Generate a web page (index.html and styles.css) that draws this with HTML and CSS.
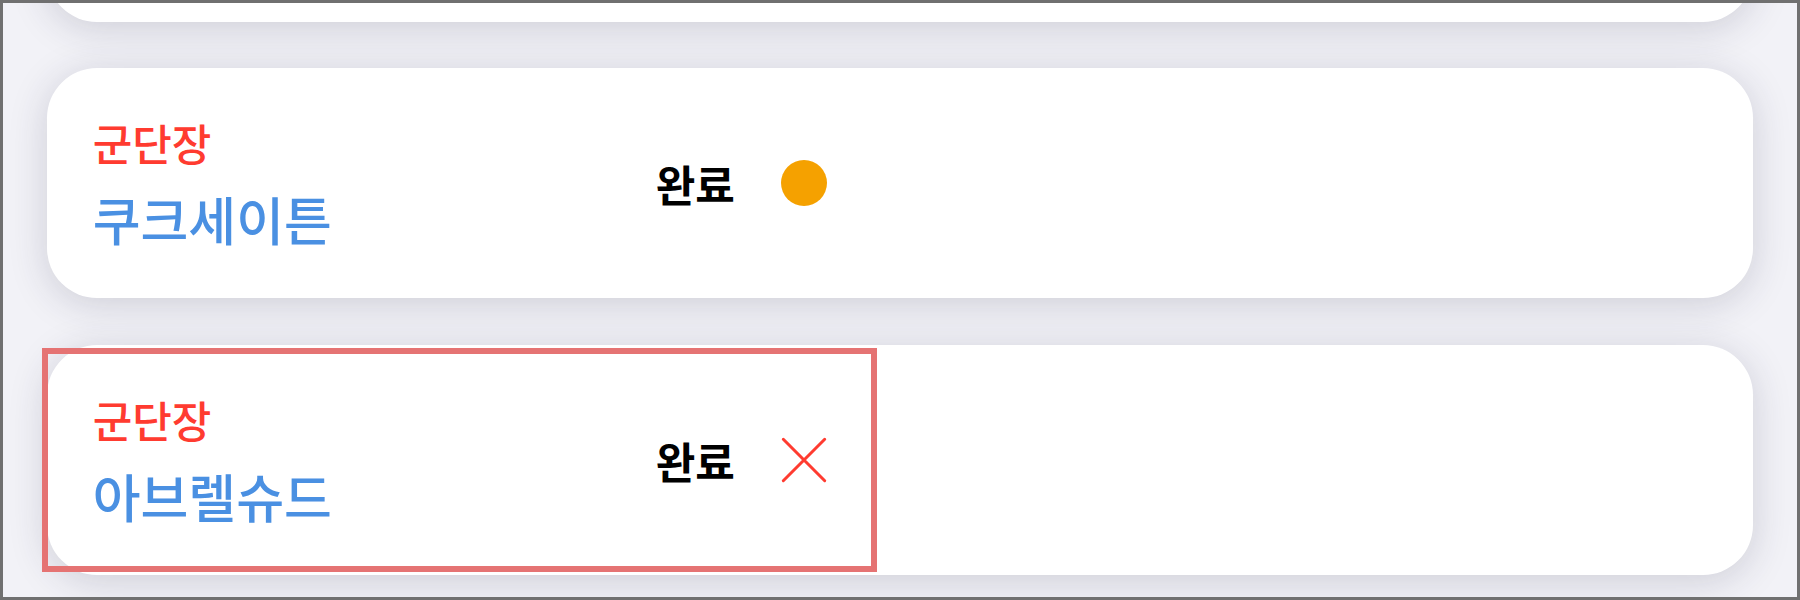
FILE: index.html
```html
<!DOCTYPE html>
<html lang="ko">
<head>
<meta charset="utf-8">
<title>레이드 목록</title>
<link rel="stylesheet" href="styles.css">
</head>
<body>
<div class="screen">
  <ul class="list">
    <li class="card card--partial"></li>
    <li class="card">
      <div class="info">
        <span class="role">군단장</span>
        <span class="name">쿠크세이튼</span>
      </div>
      <span class="status">완료</span>
      <span class="dot"></span>
    </li>
    <li class="card card--marked">
      <div class="info">
        <span class="role">군단장</span>
        <span class="name">아브렐슈드</span>
      </div>
      <span class="status">완료</span>
      <svg class="cross" width="46" height="46" viewBox="0 0 46 46" aria-hidden="true">
        <path d="M2.3 2.3 L43.7 43.7 M43.7 2.3 L2.3 43.7" />
      </svg>
      <div class="highlight"></div>
    </li>
  </ul>
</div>
</body>
</html>
```

FILE: styles.css
```css
html, body {
  margin: 0;
  padding: 0;
}

body {
  font-family: "Noto Sans CJK KR", "Noto Sans", sans-serif;
  background: #f2f2f7;
}

.screen {
  width: 1800px;
  height: 600px;
  box-sizing: border-box;
  border: 3px solid #707070;
  overflow: hidden;
  background: #f2f2f7;
}

.list {
  list-style: none;
  margin: -211.3px 0 0;
  padding: 0 43.7px;
  display: flex;
  flex-direction: column;
  gap: 46.7px;
}

.card {
  position: relative;
  height: 230px;
  flex: none;
  box-sizing: border-box;
  padding: 0 46px;
  background: #ffffff;
  border-radius: 50px;
  box-shadow: 0 6px 38px rgba(40, 40, 70, 0.18);
  display: flex;
  align-items: center;
}

.info {
  width: 563px;
  flex: none;
  display: flex;
  flex-direction: column;
  gap: 20px;
}

.role {
  font-size: 43px;
  line-height: 52px;
  font-weight: 500;
  color: #ff3b30;
}

.name {
  font-size: 52px;
  line-height: 62px;
  font-weight: 500;
  color: #4a90e2;
}

.status {
  font-size: 43px;
  line-height: 52px;
  font-weight: 700;
  color: #000000;
  margin-right: 46px;
}

.dot {
  width: 46px;
  height: 46px;
  border-radius: 50%;
  background: #f5a100;
  flex: none;
}

.cross {
  flex: none;
  display: block;
}

.cross path {
  fill: none;
  stroke: #ff3b30;
  stroke-width: 3;
  stroke-linecap: round;
}

.highlight {
  position: absolute;
  left: -5px;
  top: 3px;
  width: 835px;
  height: 224px;
  box-sizing: border-box;
  border: 6px solid #e57373;
  pointer-events: none;
}
```
